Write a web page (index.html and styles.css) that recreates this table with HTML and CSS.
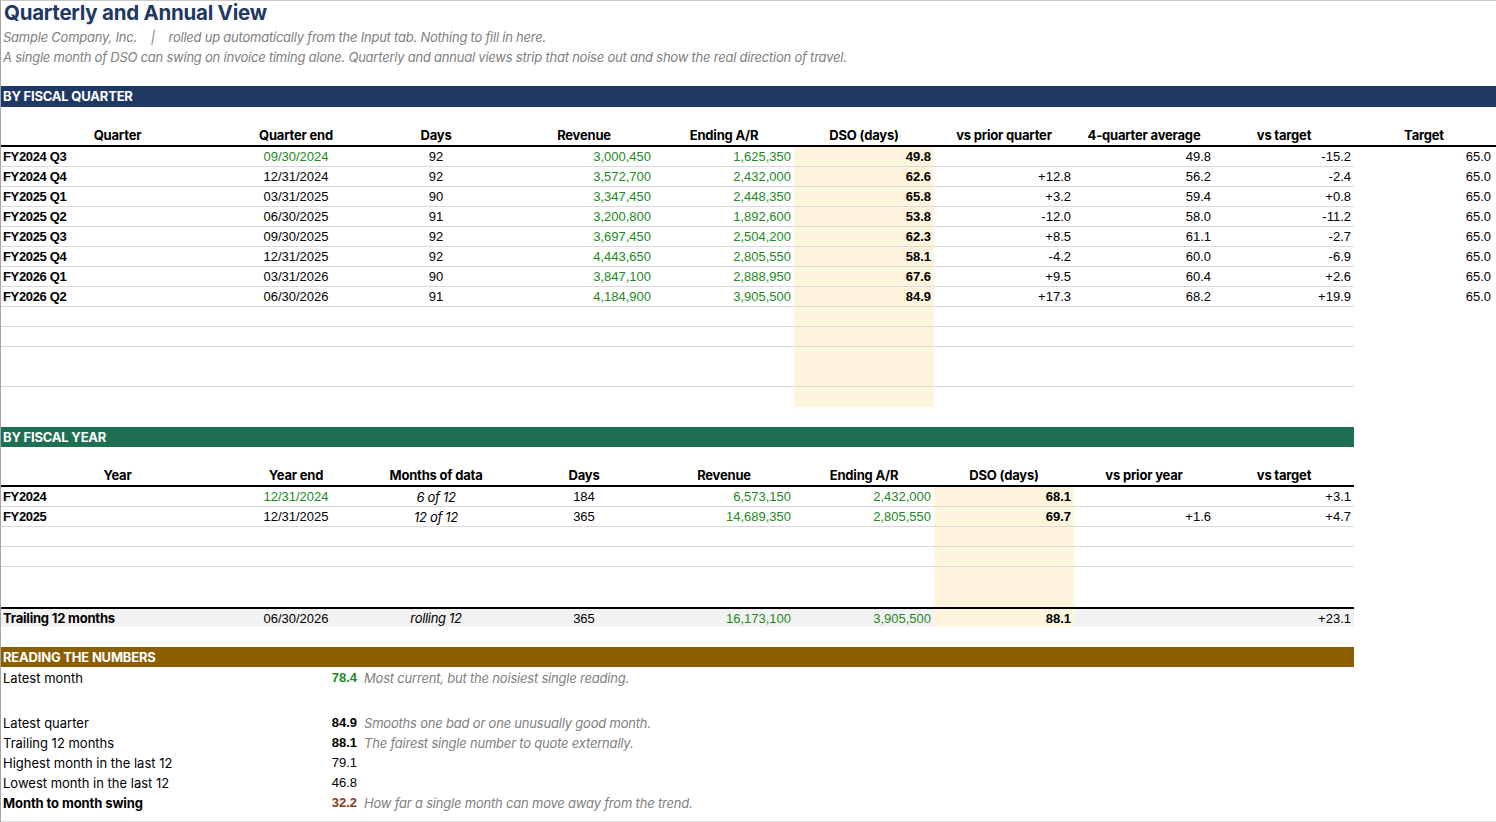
FILE: index.html
```html
<!DOCTYPE html>
<html lang="en">
<head>
<meta charset="utf-8">
<title>Quarterly and Annual View</title>
<link rel="stylesheet" href="styles.css">
</head>
<body>
<div class="sheet">
  <div class="title">Quarterly and Annual View</div>
  <div class="sub">Sample Company, Inc. &nbsp;&nbsp;&nbsp;| &nbsp;&nbsp;&nbsp;rolled up automatically from the Input tab. Nothing to fill in here.</div>
  <div class="sub">A single month of DSO can swing on invoice timing alone. Quarterly and annual views strip that noise out and show the real direction of travel.</div>
  <div class="gap19"></div>

  <div class="band navy">BY FISCAL QUARTER</div>
  <div class="gap"></div>

  <div class="row head full">
    <div class="c">Quarter</div><div class="c">Quarter end</div><div class="c">Days</div><div class="c">Revenue</div><div class="c">Ending A/R</div><div class="c">DSO (days)</div><div class="c">vs prior quarter</div><div class="c">4-quarter average</div><div class="c">vs target</div><div class="c">Target</div>
  </div>
  <div class="row ln q">
    <div class="lab">FY2024 Q3</div><div class="c num grn">09/30/2024</div><div class="c num">92</div><div class="r num grn">3,000,450</div><div class="r num grn">1,625,350</div><div class="r num dso">49.8</div><div class="r num"></div><div class="r num">49.8</div><div class="r num">-15.2</div><div class="r num tgt">65.0</div>
  </div>
  <div class="row ln q">
    <div class="lab">FY2024 Q4</div><div class="c num">12/31/2024</div><div class="c num">92</div><div class="r num grn">3,572,700</div><div class="r num grn">2,432,000</div><div class="r num dso">62.6</div><div class="r num">+12.8</div><div class="r num">56.2</div><div class="r num">-2.4</div><div class="r num tgt">65.0</div>
  </div>
  <div class="row ln q">
    <div class="lab">FY2025 Q1</div><div class="c num">03/31/2025</div><div class="c num">90</div><div class="r num grn">3,347,450</div><div class="r num grn">2,448,350</div><div class="r num dso">65.8</div><div class="r num">+3.2</div><div class="r num">59.4</div><div class="r num">+0.8</div><div class="r num tgt">65.0</div>
  </div>
  <div class="row ln q">
    <div class="lab">FY2025 Q2</div><div class="c num">06/30/2025</div><div class="c num">91</div><div class="r num grn">3,200,800</div><div class="r num grn">1,892,600</div><div class="r num dso">53.8</div><div class="r num">-12.0</div><div class="r num">58.0</div><div class="r num">-11.2</div><div class="r num tgt">65.0</div>
  </div>
  <div class="row ln q">
    <div class="lab">FY2025 Q3</div><div class="c num">09/30/2025</div><div class="c num">92</div><div class="r num grn">3,697,450</div><div class="r num grn">2,504,200</div><div class="r num dso">62.3</div><div class="r num">+8.5</div><div class="r num">61.1</div><div class="r num">-2.7</div><div class="r num tgt">65.0</div>
  </div>
  <div class="row ln q">
    <div class="lab">FY2025 Q4</div><div class="c num">12/31/2025</div><div class="c num">92</div><div class="r num grn">4,443,650</div><div class="r num grn">2,805,550</div><div class="r num dso">58.1</div><div class="r num">-4.2</div><div class="r num">60.0</div><div class="r num">-6.9</div><div class="r num tgt">65.0</div>
  </div>
  <div class="row ln q">
    <div class="lab">FY2026 Q1</div><div class="c num">03/31/2026</div><div class="c num">90</div><div class="r num grn">3,847,100</div><div class="r num grn">2,888,950</div><div class="r num dso">67.6</div><div class="r num">+9.5</div><div class="r num">60.4</div><div class="r num">+2.6</div><div class="r num tgt">65.0</div>
  </div>
  <div class="row ln q">
    <div class="lab">FY2026 Q2</div><div class="c num">06/30/2026</div><div class="c num">91</div><div class="r num grn">4,184,900</div><div class="r num grn">3,905,500</div><div class="r num dso">84.9</div><div class="r num">+17.3</div><div class="r num">68.2</div><div class="r num">+19.9</div><div class="r num tgt">65.0</div>
  </div>
  <div class="row ln q"><div></div><div></div><div></div><div></div><div></div><div class="dso"></div><div></div><div></div><div></div><div class="tgt"></div></div>
  <div class="row ln q"><div></div><div></div><div></div><div></div><div></div><div class="dso"></div><div></div><div></div><div></div><div class="tgt"></div></div>
  <div class="row q"><div></div><div></div><div></div><div></div><div></div><div class="dso"></div><div></div><div></div><div></div><div class="tgt"></div></div>
  <div class="row ln q"><div></div><div></div><div></div><div></div><div></div><div class="dso"></div><div></div><div></div><div></div><div class="tgt"></div></div>
  <div class="row q"><div></div><div></div><div></div><div></div><div></div><div class="dso"></div><div></div><div></div><div></div><div class="tgt"></div></div>
  <div class="gap"></div>

  <div class="band green">BY FISCAL YEAR</div>
  <div class="gap"></div>

  <div class="row head part">
    <div class="c">Year</div><div class="c">Year end</div><div class="c">Months of data</div><div class="c">Days</div><div class="c">Revenue</div><div class="c">Ending A/R</div><div class="c">DSO (days)</div><div class="c">vs prior year</div><div class="c">vs target</div>
  </div>
  <div class="row ln y">
    <div class="lab">FY2024</div><div class="c num grn">12/31/2024</div><div class="c it">6 of 12</div><div class="c num">184</div><div class="r num grn">6,573,150</div><div class="r num grn">2,432,000</div><div class="r num dso">68.1</div><div class="r num"></div><div class="r num">+3.1</div>
  </div>
  <div class="row ln y">
    <div class="lab">FY2025</div><div class="c num">12/31/2025</div><div class="c it">12 of 12</div><div class="c num">365</div><div class="r num grn">14,689,350</div><div class="r num grn">2,805,550</div><div class="r num dso">69.7</div><div class="r num">+1.6</div><div class="r num">+4.7</div>
  </div>
  <div class="row ln y"><div></div><div></div><div></div><div></div><div></div><div></div><div class="dso"></div><div></div><div></div></div>
  <div class="row ln y"><div></div><div></div><div></div><div></div><div></div><div></div><div class="dso"></div><div></div><div></div></div>
  <div class="row y"><div></div><div></div><div></div><div></div><div></div><div></div><div class="dso"></div><div></div><div></div></div>
  <div class="row y"><div></div><div></div><div></div><div></div><div></div><div></div><div class="dso"></div><div></div><div></div></div>
  <div class="row y total">
    <div class="lab2">Trailing 12 months</div><div class="c num">06/30/2026</div><div class="c it">rolling 12</div><div class="c num">365</div><div class="r num grn">16,173,100</div><div class="r num grn">3,905,500</div><div class="r num dso">88.1</div><div class="r num"></div><div class="r num">+23.1</div>
  </div>
  <div class="gap"></div>

  <div class="band brown">READING THE NUMBERS</div>

  <div class="read first"><div class="rl">Latest month</div><div class="rv grn">78.4</div><div class="rc">Most current, but the noisiest single reading.</div></div>
  <div class="gap23"></div>
  <div class="read"><div class="rl">Latest quarter</div><div class="rv">84.9</div><div class="rc">Smooths one bad or one unusually good month.</div></div>
  <div class="read"><div class="rl">Trailing 12 months</div><div class="rv">88.1</div><div class="rc">The fairest single number to quote externally.</div></div>
  <div class="read"><div class="rl">Highest month in the last 12</div><div class="rv plain">79.1</div><div class="rc"></div></div>
  <div class="read"><div class="rl">Lowest month in the last 12</div><div class="rv plain">46.8</div><div class="rc"></div></div>
  <div class="read"><div class="rl strong">Month to month swing</div><div class="rv red">32.2</div><div class="rc">How far a single month can move away from the trend.</div></div>
  <div class="foot"></div>
</div>
</body>
</html>
```
FILE: styles.css
```css
html, body {
  margin: 0;
  padding: 0;
  background: #fff;
}
body {
  width: 1496px;
  height: 822px;
  overflow: hidden;
  font-family: Inter, "Liberation Sans", Arial, sans-serif;
  font-size: 13px;
  color: #000;
}
.sheet {
  box-sizing: border-box;
  width: 1496px;
  height: 822px;
  border-top: 1px solid #c8c8c8;
  border-left: 1px solid #a6a6a6;
}
.title {
  height: 26px;
  line-height: 24px;
  padding-left: 3px;
  font-size: 20.5px;
  font-weight: 700;
  color: #1f3864;
  letter-spacing: -0.25px;
}
.sub {
  height: 20px;
  line-height: 20px;
  padding-left: 2px;
  font-style: italic;
  color: #808080;
  font-size: 13px;
  letter-spacing: -0.23px;
  white-space: nowrap;
}
.gap19 { height: 19px; }
.gap { height: 20px; }
.gap23 { height: 23px; }

.band {
  height: 20px;
  line-height: 20px;
  padding-left: 2px;
  color: #fff;
  font-weight: 700;
  font-size: 13px;
  letter-spacing: -0.2px;
  box-sizing: border-box;
}
.navy { background: #203864; width: 1495px; height: 21px; line-height: 21px; }
.green { background: #1f7052; width: 1353px; }
.brown { background: #8b5e00; width: 1353px; }

.row {
  display: grid;
  grid-template-columns: 233px 124px 156px repeat(7, 140px);
  height: 20px;
}
.row > div {
  box-sizing: border-box;
  height: 20px;
  line-height: 20px;
  white-space: nowrap;
  overflow: visible;
}
.row.head {
  box-sizing: border-box;
  border-bottom: 2px solid #000;
  font-weight: 700;
  letter-spacing: -0.2px;
}
.row.head > div { height: 18px; line-height: 17px; }
.row.head.full { width: 1495px; }
.row.head.part { width: 1353px; }

.row.ln > div:not(.tgt) {
  border-bottom: 1px solid #d9d9d9;
  line-height: 20px;
}

.c { text-align: center; }
.r { text-align: right; padding-right: 3px; }
.num { font-family: "Liberation Sans", Arial, sans-serif; }
.lab {
  font-family: "Liberation Sans", Arial, sans-serif;
  font-weight: 700;
  padding-left: 2px;
  letter-spacing: -0.35px;
}
.lab2 {
  font-weight: 700;
  padding-left: 2px;
  letter-spacing: -0.2px;
}
.it { font-style: italic; letter-spacing: -0.3px; }
.grn { color: #1d8a1d; }
.row .dso {
  background: #fff4dd;
  font-weight: 700;
}
.row.total {
  box-sizing: border-box;
  width: 1353px;
  height: 20px;
  border-top: 2px solid #000;
  background: #f2f2f2;
}
.row.total > div { height: 18px; line-height: 19px; }

.read {
  display: grid;
  grid-template-columns: 233px 124px 1fr;
  height: 20px;
  line-height: 20px;
}
.read.first { height: 23px; line-height: 22px; }
.rl { padding-left: 2px; letter-spacing: 0; }
.rl.strong { font-weight: 700; letter-spacing: -0.1px; }
.rv {
  text-align: right;
  font-family: "Liberation Sans", Arial, sans-serif;
  font-weight: 700;
  padding-right: 1px;
}
.rv.plain { font-weight: 400; }
.rv.red { color: #8b3a1a; }
.rc {
  padding-left: 6px;
  font-style: italic;
  color: #808080;
  letter-spacing: -0.2px;
  white-space: nowrap;
}
.foot {
  margin-top: 8px;
  border-top: 1px solid #dcdcdc;
}
```
